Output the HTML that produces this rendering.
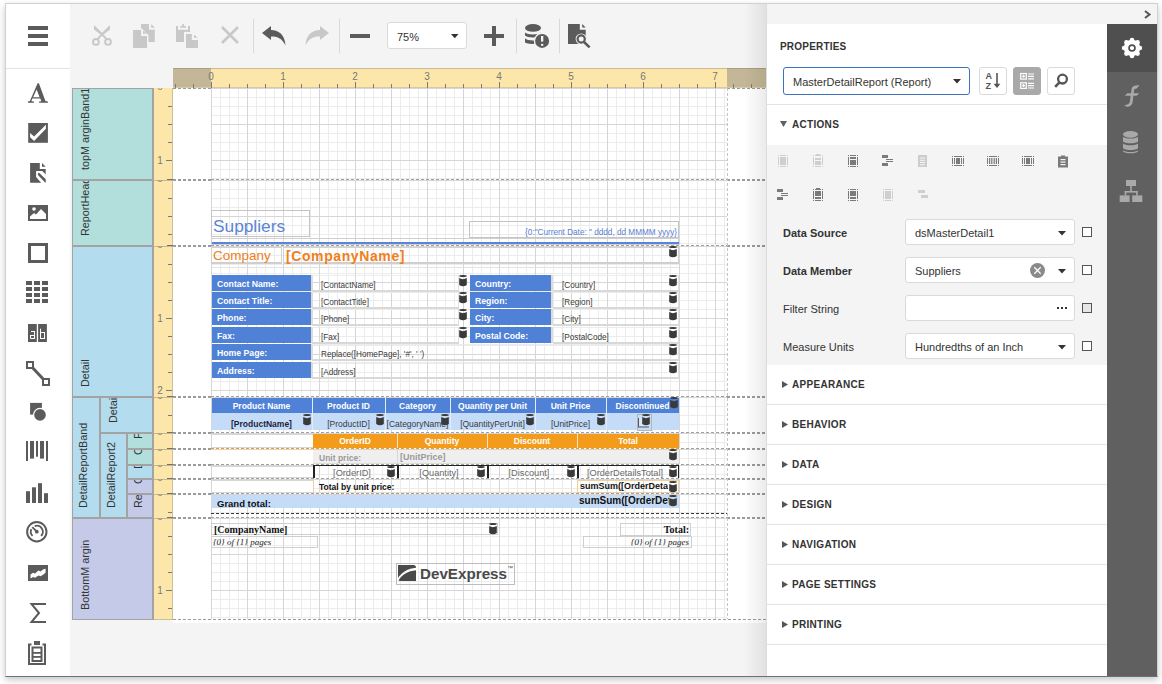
<!DOCTYPE html><html><head><meta charset="utf-8"><style>
*{margin:0;padding:0;box-sizing:border-box}
html,body{width:1162px;height:684px;overflow:hidden;background:#fff;font-family:"Liberation Sans", sans-serif}
.abs{position:absolute}
.rt{position:absolute;white-space:nowrap;transform-origin:0 0;transform:rotate(-90deg);font-size:12px;color:#333;line-height:14px}
svg{position:absolute;overflow:visible}
.t{position:absolute;white-space:nowrap}
</style></head><body>
<div class="abs" style="left:5px;top:3px;width:1153px;height:674px;box-shadow:0 3px 7px rgba(0,0,0,.22);background:#f4f4f4"></div>
<div class="abs" style="left:5px;top:3px;width:1153px;height:674px;border:1px solid #d0d0d0;border-bottom-color:#707070;z-index:50;pointer-events:none"></div>
<div class="abs" style="left:6px;top:4px;width:64px;height:672px;background:#fff"></div>
<div class="abs" style="left:6px;top:68px;width:64px;height:1px;background:#e3e3e3"></div>
<div class="abs" style="left:28px;top:26px;width:20px;height:4px;background:#5b5b5b"></div>
<div class="abs" style="left:28px;top:34px;width:20px;height:4px;background:#5b5b5b"></div>
<div class="abs" style="left:28px;top:42px;width:20px;height:4px;background:#5b5b5b"></div>
<svg style="left:24px;top:78px" width="28" height="30" viewBox="0 0 28 30"><path fill-rule="evenodd" d="M13.6 5.2 H14.9 L21.4 22.9 L23.9 23.6 V24.8 H15.1 V23.6 L17.4 23.2 L16.3 20.6 H8.3 L7.4 23.2 L9.9 23.6 V24.8 H3.9 V23.6 L5.9 23.1 Z M12.6 11.6 L9.1 19.3 H15.6 Z" fill="#5b5b5b"/></svg>
<svg style="left:28px;top:123px" width="20" height="20" viewBox="0 0 20 20"><rect x="0.2" y="0" width="19.7" height="19.8" fill="#5b5b5b"/><path d="M2.1 10.1 L2.1 14.3 L6.1 18 L17.9 5.7 L17.9 1.8 L6.1 13.6 Z" fill="#fff"/></svg>
<svg style="left:24px;top:158px" width="28" height="30" viewBox="0 0 28 30"><path d="M6.1 5 H15.8 V11 H21.7 V24.8 H6.1 Z" fill="#5b5b5b"/><path d="M18 5 V8.8 H21.7 Z" fill="#5b5b5b"/><path d="M12.1 12.9 H18.2 L21.9 16.6 V25 H17.3 L12.1 19 Z" fill="#fff"/><path d="M13.9 15.5 L15.1 14.8 L21.7 21.2 V24.6 H21.1 L13.9 17.1 Z" fill="#5b5b5b"/></svg>
<svg style="left:28px;top:205px" width="20" height="16" viewBox="0 0 20 16"><rect width="20" height="16" fill="#5b5b5b"/><path d="M2 14 V11.5 L6 8 L8 9.5 L13 4 L18 9 V14 Z" fill="#fff"/><circle cx="6" cy="4" r="1.8" fill="#fff"/></svg>
<div class="abs" style="left:28px;top:243px;width:20px;height:20px;border:3px solid #5b5b5b"></div>
<div class="abs" style="left:26px;top:281px;width:6px;height:4px;background:#5b5b5b"></div>
<div class="abs" style="left:34px;top:281px;width:6px;height:4px;background:#5b5b5b"></div>
<div class="abs" style="left:42px;top:281px;width:6px;height:4px;background:#5b5b5b"></div>
<div class="abs" style="left:26px;top:287px;width:6px;height:4px;background:#5b5b5b"></div>
<div class="abs" style="left:34px;top:287px;width:6px;height:4px;background:#5b5b5b"></div>
<div class="abs" style="left:42px;top:287px;width:6px;height:4px;background:#5b5b5b"></div>
<div class="abs" style="left:26px;top:293px;width:6px;height:4px;background:#5b5b5b"></div>
<div class="abs" style="left:34px;top:293px;width:6px;height:4px;background:#5b5b5b"></div>
<div class="abs" style="left:42px;top:293px;width:6px;height:4px;background:#5b5b5b"></div>
<div class="abs" style="left:26px;top:299px;width:6px;height:4px;background:#5b5b5b"></div>
<div class="abs" style="left:34px;top:299px;width:6px;height:4px;background:#5b5b5b"></div>
<div class="abs" style="left:42px;top:299px;width:6px;height:4px;background:#5b5b5b"></div>
<svg style="left:24px;top:318px" width="28" height="30" viewBox="0 0 28 30"><rect x="4" y="6" width="8.8" height="18" fill="#5b5b5b"/><rect x="14.1" y="6" width="8.8" height="18" fill="#5b5b5b"/><g fill="#fff"><rect x="7" y="13" width="4" height="1"/><rect x="10" y="13" width="1" height="8"/><rect x="6" y="17" width="4" height="1"/><rect x="6" y="17" width="1" height="3.5"/><rect x="6.5" y="20" width="4.5" height="1"/><rect x="16" y="10.7" width="1" height="10.3"/><rect x="16" y="14" width="5" height="1"/><rect x="20" y="14" width="1" height="7"/><rect x="16" y="20" width="5" height="1"/></g></svg>
<svg style="left:26px;top:361px" width="24" height="25" viewBox="0 0 24 25"><path d="M4 4 L20 21" stroke="#5b5b5b" stroke-width="3"/><rect x="1" y="1" width="6" height="6" fill="#fff" stroke="#5b5b5b" stroke-width="2"/><rect x="17" y="18" width="6" height="6" fill="#fff" stroke="#5b5b5b" stroke-width="2"/></svg>
<svg style="left:22px;top:398px" width="30" height="30" viewBox="0 0 30 30"><rect x="8.1" y="4.9" width="11.8" height="11.7" fill="#5b5b5b"/><circle cx="18" cy="16.9" r="7.1" fill="#fff"/><circle cx="18" cy="16.9" r="5.8" fill="#5b5b5b"/></svg>
<svg style="left:26px;top:441px" width="22" height="20" viewBox="0 0 22 20"><rect x="0" y="0" width="2" height="20" fill="#5b5b5b"/><rect x="4" y="0" width="4" height="17.6" fill="#5b5b5b"/><rect x="10" y="0" width="2" height="15.7" fill="#5b5b5b"/><rect x="14" y="0" width="4" height="17.6" fill="#5b5b5b"/><rect x="20" y="0" width="2" height="20" fill="#5b5b5b"/></svg>
<svg style="left:26px;top:483px" width="22" height="20" viewBox="0 0 22 20"><rect x="0" y="8.2" width="4" height="11.8" fill="#5b5b5b"/><rect x="6" y="4.300000000000001" width="4" height="15.7" fill="#5b5b5b"/><rect x="12" y="0.1999999999999993" width="4" height="19.8" fill="#5b5b5b"/><rect x="18" y="10.2" width="4" height="9.8" fill="#5b5b5b"/></svg>
<svg style="left:26px;top:521px" width="22" height="22" viewBox="0 0 22 22"><circle cx="10.8" cy="10.7" r="9.7" fill="none" stroke="#5b5b5b" stroke-width="2"/><path d="M6.56 14.94 A6 6 0 0 1 5.36 8.16" fill="none" stroke="#5b5b5b" stroke-width="1.8"/><path d="M8.75 5.06 A6 6 0 0 1 15.04 14.94" fill="none" stroke="#5b5b5b" stroke-width="1.8"/><path d="M10.8 10.7 L6.3 6.2" stroke="#5b5b5b" stroke-width="1.8"/><circle cx="10.8" cy="10.7" r="1.9" fill="#5b5b5b"/></svg>
<svg style="left:28px;top:565px" width="20" height="16" viewBox="0 0 20 16"><rect width="20" height="16" fill="#5b5b5b"/><path d="M2.5 9.5 L5 7.8 L7 8.6 L10.5 5.6 L12.5 6.6 L15.5 4.2 L17.6 3.8 L17.6 7.4 L15.5 9.4 L12.5 11.2 L10.5 10.4 L7 12.8 L5 12 L2.5 13.6 Z" fill="#fff"/></svg>
<svg style="left:30px;top:603px" width="17" height="20" viewBox="0 0 17 20"><path d="M16 1 H1.5 L9 10 L1.5 19 H16" fill="none" stroke="#5b5b5b" stroke-width="2"/></svg>
<svg style="left:28px;top:641px" width="18" height="24" viewBox="0 0 18 24"><path d="M3.5 3.5 H1 V23 H17 V3.5 H14.5" fill="none" stroke="#5b5b5b" stroke-width="2"/><rect x="6" y="0" width="6" height="4" fill="#5b5b5b"/><rect x="4.5" y="6.5" width="9" height="13.5" fill="none" stroke="#5b5b5b" stroke-width="2"/><rect x="5" y="11" width="8" height="1.8" fill="#5b5b5b"/><rect x="5" y="15" width="8" height="1.8" fill="#5b5b5b"/></svg>
<div class="abs" style="left:253px;top:19px;width:1px;height:34px;background:#d9d9d9"></div>
<div class="abs" style="left:339px;top:19px;width:1px;height:34px;background:#d9d9d9"></div>
<div class="abs" style="left:516px;top:19px;width:1px;height:34px;background:#d9d9d9"></div>
<div class="abs" style="left:559px;top:19px;width:1px;height:34px;background:#d9d9d9"></div>
<svg style="left:88px;top:20px" width="28" height="30" viewBox="0 0 28 30"><path d="M6 5.8 L6.8 5.8 L15.2 14 L19.2 18.6 L17.8 19.8 L13.8 15.6 L6 9.6 Z" fill="#c8c8c8"/><path d="M22 5.8 L21.2 5.8 L12.8 14 L8.8 18.6 L10.2 19.8 L14.2 15.6 L22 9.6 Z" fill="#c8c8c8"/><circle cx="7.9" cy="21.9" r="2.9" fill="none" stroke="#c8c8c8" stroke-width="1.9"/><circle cx="20" cy="21.9" r="2.9" fill="none" stroke="#c8c8c8" stroke-width="1.9"/></svg>
<svg style="left:128px;top:20px" width="76" height="30" viewBox="0 0 76 30"><path d="M13 4 H21 V9.8 H26.8 V22 H13 Z" fill="#c8c8c8"/><path d="M23.2 4 V7.8 H26.8 Z" fill="#c8c8c8"/><path d="M5 10 H13.2 L19 15.8 V28 H5 Z" fill="#f4f4f4" stroke="#f4f4f4" stroke-width="3"/><path d="M5 10 H13.1 V16 H19 V28 H5 Z" fill="#c8c8c8"/><path d="M15 10.4 V13.8 H19 Z" fill="#c8c8c8"/></svg>
<svg style="left:128px;top:20px" width="76" height="30" viewBox="0 0 76 30"><rect x="48" y="6" width="2" height="16" fill="#c8c8c8"/><rect x="60" y="6" width="2" height="6" fill="#c8c8c8"/><rect x="48" y="9.8" width="14" height="2" fill="#c8c8c8"/><rect x="48" y="11" width="8" height="11" fill="#c8c8c8"/><rect x="54.3" y="4" width="1.6" height="2" fill="#c8c8c8"/><rect x="52.3" y="6" width="5.6" height="1.7" fill="#c8c8c8"/><path d="M58 14 H63.8 L70 20 V28 H58 Z" fill="#f4f4f4" stroke="#f4f4f4" stroke-width="3"/><path d="M58 14 H63.8 V20 H70 V28 H58 Z" fill="#c8c8c8"/><path d="M66 14.4 V17.7 H69.6 Z" fill="#c8c8c8"/></svg>
<svg style="left:221px;top:26px" width="18" height="18" viewBox="0 0 18 18"><path d="M1 1 L17 17 M17 1 L1 17" stroke="#c8c8c8" stroke-width="2.6"/></svg>
<svg style="left:262px;top:26px" width="24" height="20" viewBox="0 0 24 20"><path d="M0 7 L9 0 V4 C17 4 23 9 23.5 19.5 C20 12 15 10.5 9 10.5 V14 Z" fill="#5b5b5b"/></svg>
<svg style="left:305px;top:26px" width="24" height="20" viewBox="0 0 24 20"><path d="M24 7 L15 0 V4 C7 4 1 9 0.5 19.5 C4 12 9 10.5 15 10.5 V14 Z" fill="#c8c8c8"/></svg>
<div class="abs" style="left:350px;top:34px;width:20px;height:4px;background:#5b5b5b"></div>
<div class="abs" style="left:387px;top:22px;width:80px;height:27px;background:#fff;border:1px solid #dadada;border-radius:3px"></div>
<div class="t" style="left:397px;top:30px;font-size:11px;line-height:14px;color:#333">75%</div>
<svg style="left:450.5px;top:34px" width="7.5" height="4.2" viewBox="0 0 9 5"><path d="M0 0 H9 L4.5 5 Z" fill="#333"/></svg>
<div class="abs" style="left:484px;top:34px;width:20px;height:4px;background:#5b5b5b"></div>
<div class="abs" style="left:492px;top:26px;width:4px;height:20px;background:#5b5b5b"></div>
<svg style="left:525px;top:24px" width="25" height="24" viewBox="0 0 25 24"><ellipse cx="8" cy="3.9" rx="8" ry="3.9" fill="#5b5b5b"/><path d="M0 8.6 C2 11.2 14 11.2 16 8.6 V11.6 C14 14.2 2 14.2 0 11.6 Z" fill="#5b5b5b"/><path d="M0 14.2 C2 16.8 12 16.8 13.5 15.8 L12 19.6 C6 20.2 2 19.8 0 18.6 Z" fill="#5b5b5b"/><circle cx="17.1" cy="16.9" r="8.3" fill="#f4f4f4"/><circle cx="17.1" cy="16.9" r="7" fill="#5b5b5b"/><rect x="16" y="12" width="2.3" height="5.6" fill="#f4f4f4"/><rect x="16" y="19.9" width="2.3" height="1.9" fill="#f4f4f4"/></svg>
<svg style="left:568px;top:24px" width="23" height="24" viewBox="0 0 23 24"><path d="M0 0 H11.8 V5.8 H17.7 V19.9 H0 Z" fill="#5b5b5b"/><path d="M14.2 0 V3.5 H17.7 Z" fill="#5b5b5b"/><circle cx="13.2" cy="15" r="5.6" fill="#f4f4f4"/><path d="M16.2 18.2 L21.6 23.4" stroke="#f4f4f4" stroke-width="5"/><circle cx="13.2" cy="15" r="3.6" fill="#f4f4f4" stroke="#5b5b5b" stroke-width="2.2"/><path d="M16 18 L21.6 23.4" stroke="#5b5b5b" stroke-width="2.6"/></svg>
<div class="abs" style="left:173px;top:88px;width:593px;height:535px;background:#fff"></div>
<div class="abs" style="left:173px;top:68px;width:593px;height:20px;background:#fde6a9;border-top:1px solid #c9bb94"></div>
<div class="abs" style="left:173px;top:68px;width:38px;height:20px;background:#c3b797;border-top:1px solid #aaa084"></div>
<div class="abs" style="left:727px;top:68px;width:39px;height:20px;background:#c3b797;border-top:1px solid #aaa084"></div>
<div class="abs" style="left:173px;top:87px;width:593px;height:1px;background:#d8c9a0"></div>
<div class="abs" style="left:175px;top:84px;width:1px;height:4px;background:#7a7a7a"></div>
<div class="abs" style="left:193px;top:84px;width:1px;height:4px;background:#7a7a7a"></div>
<div class="abs" style="left:211px;top:82px;width:1px;height:6px;background:#7a7a7a"></div>
<div class="abs" style="left:229px;top:84px;width:1px;height:4px;background:#7a7a7a"></div>
<div class="abs" style="left:247px;top:84px;width:1px;height:4px;background:#7a7a7a"></div>
<div class="abs" style="left:265px;top:84px;width:1px;height:4px;background:#7a7a7a"></div>
<div class="abs" style="left:283px;top:82px;width:1px;height:6px;background:#7a7a7a"></div>
<div class="abs" style="left:301px;top:84px;width:1px;height:4px;background:#7a7a7a"></div>
<div class="abs" style="left:319px;top:84px;width:1px;height:4px;background:#7a7a7a"></div>
<div class="abs" style="left:337px;top:84px;width:1px;height:4px;background:#7a7a7a"></div>
<div class="abs" style="left:355px;top:82px;width:1px;height:6px;background:#7a7a7a"></div>
<div class="abs" style="left:373px;top:84px;width:1px;height:4px;background:#7a7a7a"></div>
<div class="abs" style="left:391px;top:84px;width:1px;height:4px;background:#7a7a7a"></div>
<div class="abs" style="left:409px;top:84px;width:1px;height:4px;background:#7a7a7a"></div>
<div class="abs" style="left:427px;top:82px;width:1px;height:6px;background:#7a7a7a"></div>
<div class="abs" style="left:445px;top:84px;width:1px;height:4px;background:#7a7a7a"></div>
<div class="abs" style="left:463px;top:84px;width:1px;height:4px;background:#7a7a7a"></div>
<div class="abs" style="left:481px;top:84px;width:1px;height:4px;background:#7a7a7a"></div>
<div class="abs" style="left:499px;top:82px;width:1px;height:6px;background:#7a7a7a"></div>
<div class="abs" style="left:517px;top:84px;width:1px;height:4px;background:#7a7a7a"></div>
<div class="abs" style="left:535px;top:84px;width:1px;height:4px;background:#7a7a7a"></div>
<div class="abs" style="left:553px;top:84px;width:1px;height:4px;background:#7a7a7a"></div>
<div class="abs" style="left:571px;top:82px;width:1px;height:6px;background:#7a7a7a"></div>
<div class="abs" style="left:589px;top:84px;width:1px;height:4px;background:#7a7a7a"></div>
<div class="abs" style="left:607px;top:84px;width:1px;height:4px;background:#7a7a7a"></div>
<div class="abs" style="left:625px;top:84px;width:1px;height:4px;background:#7a7a7a"></div>
<div class="abs" style="left:643px;top:82px;width:1px;height:6px;background:#7a7a7a"></div>
<div class="abs" style="left:661px;top:84px;width:1px;height:4px;background:#7a7a7a"></div>
<div class="abs" style="left:679px;top:84px;width:1px;height:4px;background:#7a7a7a"></div>
<div class="abs" style="left:697px;top:84px;width:1px;height:4px;background:#7a7a7a"></div>
<div class="abs" style="left:715px;top:82px;width:1px;height:6px;background:#7a7a7a"></div>
<div class="abs" style="left:733px;top:84px;width:1px;height:4px;background:#7a7a7a"></div>
<div class="abs" style="left:751px;top:84px;width:1px;height:4px;background:#7a7a7a"></div>
<div class="t" style="left:201px;top:71px;width:20px;text-align:center;font-size:10px;line-height:11px;color:#787878">0</div>
<div class="t" style="left:273px;top:71px;width:20px;text-align:center;font-size:10px;line-height:11px;color:#787878">1</div>
<div class="t" style="left:345px;top:71px;width:20px;text-align:center;font-size:10px;line-height:11px;color:#787878">2</div>
<div class="t" style="left:417px;top:71px;width:20px;text-align:center;font-size:10px;line-height:11px;color:#787878">3</div>
<div class="t" style="left:489px;top:71px;width:20px;text-align:center;font-size:10px;line-height:11px;color:#787878">4</div>
<div class="t" style="left:561px;top:71px;width:20px;text-align:center;font-size:10px;line-height:11px;color:#787878">5</div>
<div class="t" style="left:633px;top:71px;width:20px;text-align:center;font-size:10px;line-height:11px;color:#787878">6</div>
<div class="t" style="left:705px;top:71px;width:20px;text-align:center;font-size:10px;line-height:11px;color:#787878">7</div>
<div class="abs" style="left:72px;top:88px;width:82px;height:532px;background:#a3a3a3"></div>
<div class="abs" style="left:154px;top:88px;width:19px;height:532px;background:#fde6a9;border-right:1px solid #cdbf99;border-bottom:1px solid #cdbf99"></div>
<div class="abs" style="left:173px;top:619px;width:593px;height:1px;background:repeating-linear-gradient(90deg,#9b9b9b 0 3px,transparent 3px 5px)"></div>
<div class="abs" style="left:73px;top:89px;width:79px;height:90px;background:#b2dfdb;overflow:hidden"><div class="rt" style="left:6px;top:81px;font-size:10.8px;line-height:13px;color:#333">topM arginBand1</div></div>
<div class="abs" style="left:73px;top:181px;width:79px;height:64px;background:#b2dfdb;overflow:hidden"><div class="rt" style="left:6px;top:55px;font-size:10.8px;line-height:13px;color:#333">ReportHeader</div></div>
<div class="abs" style="left:73px;top:247px;width:79px;height:149px;background:#b3dcee;overflow:hidden"><div class="rt" style="left:6px;top:140px;font-size:10.8px;line-height:13px;color:#333">Detail</div></div>
<div class="abs" style="left:73px;top:398px;width:26px;height:119px;background:#b3dcee;overflow:hidden"><div class="rt" style="left:4px;top:110px;font-size:10.8px;line-height:13px;color:#333">DetailReportBand</div></div>
<div class="abs" style="left:101px;top:398px;width:51px;height:34px;background:#b3dcee;overflow:hidden"><div class="rt" style="left:6px;top:25px;font-size:10.8px;line-height:13px;color:#333">Detail</div></div>
<div class="abs" style="left:101px;top:434px;width:25px;height:83px;background:#b3dcee;overflow:hidden"><div class="rt" style="left:4px;top:74px;font-size:10.8px;line-height:13px;color:#333">DetailReport2</div></div>
<div class="abs" style="left:128px;top:434px;width:24px;height:14px;background:#b2dfdb;overflow:hidden"><div class="rt" style="left:4px;top:5px;font-size:10.8px;line-height:13px;color:#333">F</div></div>
<div class="abs" style="left:128px;top:450px;width:24px;height:14px;background:#b2dfdb;overflow:hidden"><div class="rt" style="left:4px;top:5px;font-size:10.8px;line-height:13px;color:#333">C</div></div>
<div class="abs" style="left:128px;top:466px;width:24px;height:12px;background:#b3dcee;overflow:hidden"><div class="rt" style="left:4px;top:3px;font-size:10.8px;line-height:13px;color:#333">D</div></div>
<div class="abs" style="left:128px;top:480px;width:24px;height:13px;background:#c5cae9;overflow:hidden"><div class="rt" style="left:4px;top:4px;font-size:10.8px;line-height:13px;color:#333">C</div></div>
<div class="abs" style="left:128px;top:495px;width:24px;height:22px;background:#c5cae9;overflow:hidden"><div class="rt" style="left:4px;top:13px;font-size:10.8px;line-height:13px;color:#333">Re</div></div>
<div class="abs" style="left:73px;top:519px;width:79px;height:100px;background:#c5cae9;overflow:hidden"><div class="rt" style="left:6px;top:91px;font-size:10.8px;line-height:13px;color:#333">BottomM argin</div></div>
<div class="abs" style="left:211px;top:88px;width:516px;height:91px;background:repeating-linear-gradient(90deg,#d6d6d6 0 1px,transparent 1px 36px),repeating-linear-gradient(180deg,#d6d6d6 0 1px,transparent 1px 36px),repeating-linear-gradient(90deg,#ececec 0 1px,transparent 1px 9px),repeating-linear-gradient(180deg,#ececec 0 1px,transparent 1px 9px)"></div>
<div class="abs" style="left:211px;top:180px;width:516px;height:65px;background:repeating-linear-gradient(90deg,#d6d6d6 0 1px,transparent 1px 36px),repeating-linear-gradient(180deg,#d6d6d6 0 1px,transparent 1px 36px),repeating-linear-gradient(90deg,#ececec 0 1px,transparent 1px 9px),repeating-linear-gradient(180deg,#ececec 0 1px,transparent 1px 9px)"></div>
<div class="abs" style="left:211px;top:246px;width:516px;height:150px;background:repeating-linear-gradient(90deg,#d6d6d6 0 1px,transparent 1px 36px),repeating-linear-gradient(180deg,#d6d6d6 0 1px,transparent 1px 36px),repeating-linear-gradient(90deg,#ececec 0 1px,transparent 1px 9px),repeating-linear-gradient(180deg,#ececec 0 1px,transparent 1px 9px)"></div>
<div class="abs" style="left:211px;top:397px;width:516px;height:35px;background:repeating-linear-gradient(90deg,#d6d6d6 0 1px,transparent 1px 36px),repeating-linear-gradient(180deg,#d6d6d6 0 1px,transparent 1px 36px),repeating-linear-gradient(90deg,#ececec 0 1px,transparent 1px 9px),repeating-linear-gradient(180deg,#ececec 0 1px,transparent 1px 9px)"></div>
<div class="abs" style="left:211px;top:433px;width:516px;height:15px;background:repeating-linear-gradient(90deg,#d6d6d6 0 1px,transparent 1px 36px),repeating-linear-gradient(180deg,#d6d6d6 0 1px,transparent 1px 36px),repeating-linear-gradient(90deg,#ececec 0 1px,transparent 1px 9px),repeating-linear-gradient(180deg,#ececec 0 1px,transparent 1px 9px)"></div>
<div class="abs" style="left:211px;top:449px;width:516px;height:15px;background:repeating-linear-gradient(90deg,#d6d6d6 0 1px,transparent 1px 36px),repeating-linear-gradient(180deg,#d6d6d6 0 1px,transparent 1px 36px),repeating-linear-gradient(90deg,#ececec 0 1px,transparent 1px 9px),repeating-linear-gradient(180deg,#ececec 0 1px,transparent 1px 9px)"></div>
<div class="abs" style="left:211px;top:465px;width:516px;height:13px;background:repeating-linear-gradient(90deg,#d6d6d6 0 1px,transparent 1px 36px),repeating-linear-gradient(180deg,#d6d6d6 0 1px,transparent 1px 36px),repeating-linear-gradient(90deg,#ececec 0 1px,transparent 1px 9px),repeating-linear-gradient(180deg,#ececec 0 1px,transparent 1px 9px)"></div>
<div class="abs" style="left:211px;top:479px;width:516px;height:14px;background:repeating-linear-gradient(90deg,#d6d6d6 0 1px,transparent 1px 36px),repeating-linear-gradient(180deg,#d6d6d6 0 1px,transparent 1px 36px),repeating-linear-gradient(90deg,#ececec 0 1px,transparent 1px 9px),repeating-linear-gradient(180deg,#ececec 0 1px,transparent 1px 9px)"></div>
<div class="abs" style="left:211px;top:494px;width:516px;height:23px;background:repeating-linear-gradient(90deg,#d6d6d6 0 1px,transparent 1px 36px),repeating-linear-gradient(180deg,#d6d6d6 0 1px,transparent 1px 36px),repeating-linear-gradient(90deg,#ececec 0 1px,transparent 1px 9px),repeating-linear-gradient(180deg,#ececec 0 1px,transparent 1px 9px)"></div>
<div class="abs" style="left:211px;top:518px;width:516px;height:101px;background:repeating-linear-gradient(90deg,#d6d6d6 0 1px,transparent 1px 36px),repeating-linear-gradient(180deg,#d6d6d6 0 1px,transparent 1px 36px),repeating-linear-gradient(90deg,#ececec 0 1px,transparent 1px 9px),repeating-linear-gradient(180deg,#ececec 0 1px,transparent 1px 9px)"></div>
<div class="abs" style="left:173px;top:88px;width:38px;height:1px;background:repeating-linear-gradient(90deg,#9b9b9b 0 3px,transparent 3px 5px)"></div>
<div class="abs" style="left:727px;top:88px;width:39px;height:1px;background:repeating-linear-gradient(90deg,#9b9b9b 0 3px,transparent 3px 5px)"></div>
<div class="abs" style="left:173px;top:179px;width:38px;height:2px;background:repeating-linear-gradient(90deg,#9b9b9b 0 3px,transparent 3px 5px)"></div>
<div class="abs" style="left:211px;top:179px;width:516px;height:1px;background:repeating-linear-gradient(90deg,#a0a0a0 0 3px,transparent 3px 5px)"></div>
<div class="abs" style="left:727px;top:179px;width:39px;height:2px;background:repeating-linear-gradient(90deg,#9b9b9b 0 3px,transparent 3px 5px)"></div>
<div class="abs" style="left:154px;top:180px;width:19px;height:1px;background:#c8b98f"></div>
<div class="abs" style="left:167px;top:179px;width:6px;height:1px;background:#6f6f6f"></div>
<div class="abs" style="left:173px;top:245px;width:38px;height:2px;background:repeating-linear-gradient(90deg,#9b9b9b 0 3px,transparent 3px 5px)"></div>
<div class="abs" style="left:211px;top:245px;width:516px;height:1px;background:repeating-linear-gradient(90deg,#a0a0a0 0 3px,transparent 3px 5px)"></div>
<div class="abs" style="left:727px;top:245px;width:39px;height:2px;background:repeating-linear-gradient(90deg,#9b9b9b 0 3px,transparent 3px 5px)"></div>
<div class="abs" style="left:154px;top:246px;width:19px;height:1px;background:#c8b98f"></div>
<div class="abs" style="left:167px;top:245px;width:6px;height:1px;background:#6f6f6f"></div>
<div class="abs" style="left:173px;top:396px;width:38px;height:2px;background:repeating-linear-gradient(90deg,#9b9b9b 0 3px,transparent 3px 5px)"></div>
<div class="abs" style="left:211px;top:396px;width:516px;height:1px;background:repeating-linear-gradient(90deg,#a0a0a0 0 3px,transparent 3px 5px)"></div>
<div class="abs" style="left:727px;top:396px;width:39px;height:2px;background:repeating-linear-gradient(90deg,#9b9b9b 0 3px,transparent 3px 5px)"></div>
<div class="abs" style="left:154px;top:397px;width:19px;height:1px;background:#c8b98f"></div>
<div class="abs" style="left:167px;top:396px;width:6px;height:1px;background:#6f6f6f"></div>
<div class="abs" style="left:173px;top:432px;width:38px;height:2px;background:repeating-linear-gradient(90deg,#9b9b9b 0 3px,transparent 3px 5px)"></div>
<div class="abs" style="left:211px;top:432px;width:516px;height:1px;background:repeating-linear-gradient(90deg,#a0a0a0 0 3px,transparent 3px 5px)"></div>
<div class="abs" style="left:727px;top:432px;width:39px;height:2px;background:repeating-linear-gradient(90deg,#9b9b9b 0 3px,transparent 3px 5px)"></div>
<div class="abs" style="left:154px;top:433px;width:19px;height:1px;background:#c8b98f"></div>
<div class="abs" style="left:167px;top:432px;width:6px;height:1px;background:#6f6f6f"></div>
<div class="abs" style="left:173px;top:448px;width:38px;height:2px;background:repeating-linear-gradient(90deg,#9b9b9b 0 3px,transparent 3px 5px)"></div>
<div class="abs" style="left:211px;top:448px;width:516px;height:1px;background:repeating-linear-gradient(90deg,#a0a0a0 0 3px,transparent 3px 5px)"></div>
<div class="abs" style="left:727px;top:448px;width:39px;height:2px;background:repeating-linear-gradient(90deg,#9b9b9b 0 3px,transparent 3px 5px)"></div>
<div class="abs" style="left:154px;top:449px;width:19px;height:1px;background:#c8b98f"></div>
<div class="abs" style="left:167px;top:448px;width:6px;height:1px;background:#6f6f6f"></div>
<div class="abs" style="left:173px;top:464px;width:38px;height:2px;background:repeating-linear-gradient(90deg,#9b9b9b 0 3px,transparent 3px 5px)"></div>
<div class="abs" style="left:211px;top:464px;width:516px;height:1px;background:repeating-linear-gradient(90deg,#a0a0a0 0 3px,transparent 3px 5px)"></div>
<div class="abs" style="left:727px;top:464px;width:39px;height:2px;background:repeating-linear-gradient(90deg,#9b9b9b 0 3px,transparent 3px 5px)"></div>
<div class="abs" style="left:154px;top:465px;width:19px;height:1px;background:#c8b98f"></div>
<div class="abs" style="left:167px;top:464px;width:6px;height:1px;background:#6f6f6f"></div>
<div class="abs" style="left:173px;top:478px;width:38px;height:2px;background:repeating-linear-gradient(90deg,#9b9b9b 0 3px,transparent 3px 5px)"></div>
<div class="abs" style="left:211px;top:478px;width:516px;height:1px;background:repeating-linear-gradient(90deg,#a0a0a0 0 3px,transparent 3px 5px)"></div>
<div class="abs" style="left:727px;top:478px;width:39px;height:2px;background:repeating-linear-gradient(90deg,#9b9b9b 0 3px,transparent 3px 5px)"></div>
<div class="abs" style="left:154px;top:479px;width:19px;height:1px;background:#c8b98f"></div>
<div class="abs" style="left:167px;top:478px;width:6px;height:1px;background:#6f6f6f"></div>
<div class="abs" style="left:173px;top:493px;width:38px;height:2px;background:repeating-linear-gradient(90deg,#9b9b9b 0 3px,transparent 3px 5px)"></div>
<div class="abs" style="left:211px;top:493px;width:516px;height:1px;background:repeating-linear-gradient(90deg,#a0a0a0 0 3px,transparent 3px 5px)"></div>
<div class="abs" style="left:727px;top:493px;width:39px;height:2px;background:repeating-linear-gradient(90deg,#9b9b9b 0 3px,transparent 3px 5px)"></div>
<div class="abs" style="left:154px;top:494px;width:19px;height:1px;background:#c8b98f"></div>
<div class="abs" style="left:167px;top:493px;width:6px;height:1px;background:#6f6f6f"></div>
<div class="abs" style="left:173px;top:517px;width:38px;height:2px;background:repeating-linear-gradient(90deg,#9b9b9b 0 3px,transparent 3px 5px)"></div>
<div class="abs" style="left:211px;top:517px;width:516px;height:1px;background:repeating-linear-gradient(90deg,#a0a0a0 0 3px,transparent 3px 5px)"></div>
<div class="abs" style="left:727px;top:517px;width:39px;height:2px;background:repeating-linear-gradient(90deg,#9b9b9b 0 3px,transparent 3px 5px)"></div>
<div class="abs" style="left:154px;top:518px;width:19px;height:1px;background:#c8b98f"></div>
<div class="abs" style="left:167px;top:517px;width:6px;height:1px;background:#6f6f6f"></div>
<div class="abs" style="left:727px;top:88px;width:1px;height:531px;background:repeating-linear-gradient(180deg,#c4c4c4 0 3px,transparent 3px 5px)"></div>
<div class="abs" style="left:168px;top:106px;width:4px;height:1px;background:#7a7a7a"></div>
<div class="abs" style="left:168px;top:124px;width:4px;height:1px;background:#7a7a7a"></div>
<div class="abs" style="left:168px;top:142px;width:4px;height:1px;background:#7a7a7a"></div>
<div class="abs" style="left:166px;top:160px;width:6px;height:1px;background:#7a7a7a"></div>
<div class="t" style="left:155px;top:155px;width:10px;text-align:center;font-size:10px;line-height:11px;color:#787878">1</div>
<div class="abs" style="left:153px;top:88px;width:13px;height:5px;overflow:hidden"><div class="t" style="left:2px;top:-6px;width:10px;text-align:center;font-size:9px;line-height:11px;color:#808080">0</div></div>
<div class="abs" style="left:168px;top:198px;width:4px;height:1px;background:#7a7a7a"></div>
<div class="abs" style="left:168px;top:216px;width:4px;height:1px;background:#7a7a7a"></div>
<div class="abs" style="left:168px;top:234px;width:4px;height:1px;background:#7a7a7a"></div>
<div class="abs" style="left:153px;top:180px;width:13px;height:5px;overflow:hidden"><div class="t" style="left:2px;top:-6px;width:10px;text-align:center;font-size:9px;line-height:11px;color:#808080">0</div></div>
<div class="abs" style="left:168px;top:264px;width:4px;height:1px;background:#7a7a7a"></div>
<div class="abs" style="left:168px;top:282px;width:4px;height:1px;background:#7a7a7a"></div>
<div class="abs" style="left:168px;top:300px;width:4px;height:1px;background:#7a7a7a"></div>
<div class="abs" style="left:166px;top:318px;width:6px;height:1px;background:#7a7a7a"></div>
<div class="t" style="left:155px;top:313px;width:10px;text-align:center;font-size:10px;line-height:11px;color:#787878">1</div>
<div class="abs" style="left:168px;top:336px;width:4px;height:1px;background:#7a7a7a"></div>
<div class="abs" style="left:168px;top:354px;width:4px;height:1px;background:#7a7a7a"></div>
<div class="abs" style="left:168px;top:372px;width:4px;height:1px;background:#7a7a7a"></div>
<div class="abs" style="left:166px;top:390px;width:6px;height:1px;background:#7a7a7a"></div>
<div class="t" style="left:155px;top:385px;width:10px;text-align:center;font-size:10px;line-height:11px;color:#787878">2</div>
<div class="abs" style="left:153px;top:246px;width:13px;height:5px;overflow:hidden"><div class="t" style="left:2px;top:-6px;width:10px;text-align:center;font-size:9px;line-height:11px;color:#808080">0</div></div>
<div class="abs" style="left:168px;top:415px;width:4px;height:1px;background:#7a7a7a"></div>
<div class="abs" style="left:153px;top:397px;width:13px;height:5px;overflow:hidden"><div class="t" style="left:2px;top:-6px;width:10px;text-align:center;font-size:9px;line-height:11px;color:#808080">0</div></div>
<div class="abs" style="left:153px;top:433px;width:13px;height:5px;overflow:hidden"><div class="t" style="left:2px;top:-6px;width:10px;text-align:center;font-size:9px;line-height:11px;color:#808080">0</div></div>
<div class="abs" style="left:153px;top:449px;width:13px;height:5px;overflow:hidden"><div class="t" style="left:2px;top:-6px;width:10px;text-align:center;font-size:9px;line-height:11px;color:#808080">0</div></div>
<div class="abs" style="left:153px;top:465px;width:13px;height:5px;overflow:hidden"><div class="t" style="left:2px;top:-6px;width:10px;text-align:center;font-size:9px;line-height:11px;color:#808080">0</div></div>
<div class="abs" style="left:153px;top:479px;width:13px;height:5px;overflow:hidden"><div class="t" style="left:2px;top:-6px;width:10px;text-align:center;font-size:9px;line-height:11px;color:#808080">0</div></div>
<div class="abs" style="left:168px;top:512px;width:4px;height:1px;background:#7a7a7a"></div>
<div class="abs" style="left:153px;top:494px;width:13px;height:5px;overflow:hidden"><div class="t" style="left:2px;top:-6px;width:10px;text-align:center;font-size:9px;line-height:11px;color:#808080">0</div></div>
<div class="abs" style="left:168px;top:536px;width:4px;height:1px;background:#7a7a7a"></div>
<div class="abs" style="left:168px;top:554px;width:4px;height:1px;background:#7a7a7a"></div>
<div class="abs" style="left:168px;top:572px;width:4px;height:1px;background:#7a7a7a"></div>
<div class="abs" style="left:166px;top:590px;width:6px;height:1px;background:#7a7a7a"></div>
<div class="t" style="left:155px;top:585px;width:10px;text-align:center;font-size:10px;line-height:11px;color:#787878">1</div>
<div class="abs" style="left:168px;top:608px;width:4px;height:1px;background:#7a7a7a"></div>
<div class="abs" style="left:153px;top:518px;width:13px;height:5px;overflow:hidden"><div class="t" style="left:2px;top:-6px;width:10px;text-align:center;font-size:9px;line-height:11px;color:#808080">0</div></div>
<div class="abs" style="left:744px;top:4px;width:22px;height:672px;background:linear-gradient(90deg,rgba(0,0,0,0),rgba(0,0,0,.08))"></div>
<div class="abs" style="left:211px;top:210px;width:99px;height:27px;border:1px solid #c4c4c4;background:transparent;"></div>
<div class="t" style="left:213px;top:215px;font-size:17.3px;line-height:22px;color:#5a85d6;font-weight:normal;">Suppliers</div>
<div class="abs" style="left:469px;top:221px;width:210px;height:17px;border:1px solid #c4c4c4;background:transparent;"></div>
<div class="t" style="left:469px;top:228px;font-size:8.2px;line-height:10px;color:#5a80d4;font-weight:normal;width:208px;text-align:right;">{0:"Current Date: " dddd, dd MMMM yyyy}</div>
<div class="abs" style="left:211px;top:238px;width:468px;height:7px;border:1px solid #d0d0d0;background:transparent;"></div>
<div class="abs" style="left:212px;top:242px;width:467px;height:2px;background:#5a85d6"></div>
<div class="abs" style="left:211px;top:247px;width:71px;height:17px;border:1px solid #d2d2d2;background:transparent;border-bottom:2px solid #cfcfcf"></div>
<div class="t" style="left:213px;top:249px;font-size:13.5px;line-height:14px;color:#f07f1a;font-weight:normal;">Company</div>
<div class="abs" style="left:283px;top:247px;width:396px;height:17px;border:1px solid #d2d2d2;background:transparent;border-bottom:2px solid #cfcfcf"></div>
<div class="t" style="left:286px;top:249px;font-size:14px;line-height:14px;color:#f07f1a;font-weight:bold;letter-spacing:0.6px">[CompanyName]</div>
<svg style="left:669px;top:246px" width="8" height="12" viewBox="0 0 8 12"><ellipse cx="4" cy="1" rx="3.8" ry="0.95" fill="#3a3a3a"/><path d="M0.2 3.1 Q4 5.2 7.8 3.1 V10 Q4 12.6 0.2 10 Z" fill="#3a3a3a"/></svg>
<div class="abs" style="left:211px;top:267px;width:468px;height:1px;background:#e2e2e2"></div>
<div class="abs" style="left:212px;top:275px;width:101px;height:16px;background:#4f81d6;border-right:2px solid #dcdcdc"></div>
<div class="t" style="left:217px;top:279px;font-size:8.7px;line-height:10px;color:#fff;font-weight:bold;">Contact Name:</div>
<div class="abs" style="left:312px;top:275px;width:147px;height:17px;border-top:1px solid #ececec;border-bottom:2px solid #d8d8d8;border-right:1px solid #e0e0e0"></div>
<div class="t" style="left:321px;top:281px;font-size:8.2px;line-height:10px;color:#3a3a3a;font-weight:normal;">[ContactName]</div>
<div class="abs" style="left:212px;top:292px;width:101px;height:16px;background:#4f81d6;border-right:2px solid #dcdcdc"></div>
<div class="t" style="left:217px;top:296px;font-size:8.7px;line-height:10px;color:#fff;font-weight:bold;">Contact Title:</div>
<div class="abs" style="left:312px;top:292px;width:147px;height:17px;border-top:1px solid #ececec;border-bottom:2px solid #d8d8d8;border-right:1px solid #e0e0e0"></div>
<div class="t" style="left:321px;top:298px;font-size:8.2px;line-height:10px;color:#3a3a3a;font-weight:normal;">[ContactTitle]</div>
<div class="abs" style="left:212px;top:309px;width:101px;height:16px;background:#4f81d6;border-right:2px solid #dcdcdc"></div>
<div class="t" style="left:217px;top:313px;font-size:8.7px;line-height:10px;color:#fff;font-weight:bold;">Phone:</div>
<div class="abs" style="left:312px;top:309px;width:147px;height:17px;border-top:1px solid #ececec;border-bottom:2px solid #d8d8d8;border-right:1px solid #e0e0e0"></div>
<div class="t" style="left:321px;top:315px;font-size:8.2px;line-height:10px;color:#3a3a3a;font-weight:normal;">[Phone]</div>
<div class="abs" style="left:212px;top:327px;width:101px;height:16px;background:#4f81d6;border-right:2px solid #dcdcdc"></div>
<div class="t" style="left:217px;top:331px;font-size:8.7px;line-height:10px;color:#fff;font-weight:bold;">Fax:</div>
<div class="abs" style="left:312px;top:327px;width:147px;height:17px;border-top:1px solid #ececec;border-bottom:2px solid #d8d8d8;border-right:1px solid #e0e0e0"></div>
<div class="t" style="left:321px;top:333px;font-size:8.2px;line-height:10px;color:#3a3a3a;font-weight:normal;">[Fax]</div>
<div class="abs" style="left:212px;top:344px;width:101px;height:16px;background:#4f81d6;border-right:2px solid #dcdcdc"></div>
<div class="t" style="left:217px;top:348px;font-size:8.7px;line-height:10px;color:#fff;font-weight:bold;">Home Page:</div>
<div class="abs" style="left:312px;top:344px;width:367px;height:17px;border-top:1px solid #ececec;border-bottom:2px solid #d8d8d8;border-right:1px solid #e0e0e0"></div>
<div class="t" style="left:321px;top:350px;font-size:8.2px;line-height:10px;color:#3a3a3a;font-weight:normal;">Replace([HomePage], '#', ' ')</div>
<div class="abs" style="left:212px;top:362px;width:101px;height:16px;background:#4f81d6;border-right:2px solid #dcdcdc"></div>
<div class="t" style="left:217px;top:366px;font-size:8.7px;line-height:10px;color:#fff;font-weight:bold;">Address:</div>
<div class="abs" style="left:312px;top:362px;width:367px;height:17px;border-top:1px solid #ececec;border-bottom:2px solid #d8d8d8;border-right:1px solid #e0e0e0"></div>
<div class="t" style="left:321px;top:368px;font-size:8.2px;line-height:10px;color:#3a3a3a;font-weight:normal;">[Address]</div>
<svg style="left:459px;top:275px" width="8" height="12" viewBox="0 0 8 12"><ellipse cx="4" cy="1" rx="3.8" ry="0.95" fill="#3a3a3a"/><path d="M0.2 3.1 Q4 5.2 7.8 3.1 V10 Q4 12.6 0.2 10 Z" fill="#3a3a3a"/></svg>
<div class="abs" style="left:470px;top:275px;width:83px;height:16px;background:#4f81d6;border-right:2px solid #dcdcdc"></div>
<div class="t" style="left:475px;top:279px;font-size:8.7px;line-height:10px;color:#fff;font-weight:bold;">Country:</div>
<div class="abs" style="left:553px;top:275px;width:126px;height:17px;border-top:1px solid #ececec;border-bottom:2px solid #d8d8d8;border-right:1px solid #e0e0e0"></div>
<div class="t" style="left:562px;top:281px;font-size:8.2px;line-height:10px;color:#3a3a3a;font-weight:normal;">[Country]</div>
<svg style="left:459px;top:292px" width="8" height="12" viewBox="0 0 8 12"><ellipse cx="4" cy="1" rx="3.8" ry="0.95" fill="#3a3a3a"/><path d="M0.2 3.1 Q4 5.2 7.8 3.1 V10 Q4 12.6 0.2 10 Z" fill="#3a3a3a"/></svg>
<div class="abs" style="left:470px;top:292px;width:83px;height:16px;background:#4f81d6;border-right:2px solid #dcdcdc"></div>
<div class="t" style="left:475px;top:296px;font-size:8.7px;line-height:10px;color:#fff;font-weight:bold;">Region:</div>
<div class="abs" style="left:553px;top:292px;width:126px;height:17px;border-top:1px solid #ececec;border-bottom:2px solid #d8d8d8;border-right:1px solid #e0e0e0"></div>
<div class="t" style="left:562px;top:298px;font-size:8.2px;line-height:10px;color:#3a3a3a;font-weight:normal;">[Region]</div>
<svg style="left:459px;top:309px" width="8" height="12" viewBox="0 0 8 12"><ellipse cx="4" cy="1" rx="3.8" ry="0.95" fill="#3a3a3a"/><path d="M0.2 3.1 Q4 5.2 7.8 3.1 V10 Q4 12.6 0.2 10 Z" fill="#3a3a3a"/></svg>
<div class="abs" style="left:470px;top:309px;width:83px;height:16px;background:#4f81d6;border-right:2px solid #dcdcdc"></div>
<div class="t" style="left:475px;top:313px;font-size:8.7px;line-height:10px;color:#fff;font-weight:bold;">City:</div>
<div class="abs" style="left:553px;top:309px;width:126px;height:17px;border-top:1px solid #ececec;border-bottom:2px solid #d8d8d8;border-right:1px solid #e0e0e0"></div>
<div class="t" style="left:562px;top:315px;font-size:8.2px;line-height:10px;color:#3a3a3a;font-weight:normal;">[City]</div>
<svg style="left:459px;top:327px" width="8" height="12" viewBox="0 0 8 12"><ellipse cx="4" cy="1" rx="3.8" ry="0.95" fill="#3a3a3a"/><path d="M0.2 3.1 Q4 5.2 7.8 3.1 V10 Q4 12.6 0.2 10 Z" fill="#3a3a3a"/></svg>
<div class="abs" style="left:470px;top:327px;width:83px;height:16px;background:#4f81d6;border-right:2px solid #dcdcdc"></div>
<div class="t" style="left:475px;top:331px;font-size:8.7px;line-height:10px;color:#fff;font-weight:bold;">Postal Code:</div>
<div class="abs" style="left:553px;top:327px;width:126px;height:17px;border-top:1px solid #ececec;border-bottom:2px solid #d8d8d8;border-right:1px solid #e0e0e0"></div>
<div class="t" style="left:562px;top:333px;font-size:8.2px;line-height:10px;color:#3a3a3a;font-weight:normal;">[PostalCode]</div>
<svg style="left:669px;top:275px" width="8" height="12" viewBox="0 0 8 12"><ellipse cx="4" cy="1" rx="3.8" ry="0.95" fill="#3a3a3a"/><path d="M0.2 3.1 Q4 5.2 7.8 3.1 V10 Q4 12.6 0.2 10 Z" fill="#3a3a3a"/></svg>
<svg style="left:669px;top:292px" width="8" height="12" viewBox="0 0 8 12"><ellipse cx="4" cy="1" rx="3.8" ry="0.95" fill="#3a3a3a"/><path d="M0.2 3.1 Q4 5.2 7.8 3.1 V10 Q4 12.6 0.2 10 Z" fill="#3a3a3a"/></svg>
<svg style="left:669px;top:309px" width="8" height="12" viewBox="0 0 8 12"><ellipse cx="4" cy="1" rx="3.8" ry="0.95" fill="#3a3a3a"/><path d="M0.2 3.1 Q4 5.2 7.8 3.1 V10 Q4 12.6 0.2 10 Z" fill="#3a3a3a"/></svg>
<svg style="left:669px;top:327px" width="8" height="12" viewBox="0 0 8 12"><ellipse cx="4" cy="1" rx="3.8" ry="0.95" fill="#3a3a3a"/><path d="M0.2 3.1 Q4 5.2 7.8 3.1 V10 Q4 12.6 0.2 10 Z" fill="#3a3a3a"/></svg>
<svg style="left:669px;top:344px" width="8" height="12" viewBox="0 0 8 12"><ellipse cx="4" cy="1" rx="3.8" ry="0.95" fill="#3a3a3a"/><path d="M0.2 3.1 Q4 5.2 7.8 3.1 V10 Q4 12.6 0.2 10 Z" fill="#3a3a3a"/></svg>
<svg style="left:669px;top:362px" width="8" height="12" viewBox="0 0 8 12"><ellipse cx="4" cy="1" rx="3.8" ry="0.95" fill="#3a3a3a"/><path d="M0.2 3.1 Q4 5.2 7.8 3.1 V10 Q4 12.6 0.2 10 Z" fill="#3a3a3a"/></svg>
<div class="abs" style="left:212px;top:398px;width:467px;height:15px;background:#4f81d6"></div>
<div class="abs" style="left:212px;top:413px;width:467px;height:17px;background:#c5dcf8"></div>
<div class="t" style="left:211px;top:401px;font-size:8.5px;line-height:10px;color:#fff;font-weight:bold;width:101px;text-align:center;overflow:hidden">Product Name</div>
<div class="t" style="left:211px;top:419px;font-size:8.5px;line-height:10px;color:#1e1e3c;font-weight:bold;width:101px;text-align:center;overflow:hidden">[ProductName]</div>
<svg style="left:303px;top:414px" width="8" height="12" viewBox="0 0 8 12"><ellipse cx="4" cy="1" rx="3.8" ry="0.95" fill="#3a3a3a"/><path d="M0.2 3.1 Q4 5.2 7.8 3.1 V10 Q4 12.6 0.2 10 Z" fill="#3a3a3a"/></svg>
<div class="abs" style="left:312px;top:398px;width:1px;height:32px;background:#e4ecf8"></div>
<div class="t" style="left:312px;top:401px;font-size:8.5px;line-height:10px;color:#fff;font-weight:bold;width:73px;text-align:center;overflow:hidden">Product ID</div>
<div class="t" style="left:312px;top:419px;font-size:8.5px;line-height:10px;color:#3a3a3a;font-weight:normal;width:73px;text-align:center;overflow:hidden">[ProductID]</div>
<svg style="left:376px;top:414px" width="8" height="12" viewBox="0 0 8 12"><ellipse cx="4" cy="1" rx="3.8" ry="0.95" fill="#3a3a3a"/><path d="M0.2 3.1 Q4 5.2 7.8 3.1 V10 Q4 12.6 0.2 10 Z" fill="#3a3a3a"/></svg>
<div class="abs" style="left:385px;top:398px;width:1px;height:32px;background:#e4ecf8"></div>
<div class="t" style="left:385px;top:401px;font-size:8.5px;line-height:10px;color:#fff;font-weight:bold;width:65px;text-align:center;overflow:hidden">Category</div>
<div class="t" style="left:385px;top:419px;font-size:8.5px;line-height:10px;color:#3a3a3a;font-weight:normal;width:65px;text-align:center;overflow:hidden">[CategoryName]</div>
<svg style="left:441px;top:414px" width="8" height="12" viewBox="0 0 8 12"><ellipse cx="4" cy="1" rx="3.8" ry="0.95" fill="#3a3a3a"/><path d="M0.2 3.1 Q4 5.2 7.8 3.1 V10 Q4 12.6 0.2 10 Z" fill="#3a3a3a"/></svg>
<div class="abs" style="left:450px;top:398px;width:1px;height:32px;background:#e4ecf8"></div>
<div class="t" style="left:450px;top:401px;font-size:8.5px;line-height:10px;color:#fff;font-weight:bold;width:85px;text-align:center;overflow:hidden">Quantity per Unit</div>
<div class="t" style="left:450px;top:419px;font-size:8.5px;line-height:10px;color:#3a3a3a;font-weight:normal;width:85px;text-align:center;overflow:hidden">[QuantityPerUnit]</div>
<svg style="left:526px;top:414px" width="8" height="12" viewBox="0 0 8 12"><ellipse cx="4" cy="1" rx="3.8" ry="0.95" fill="#3a3a3a"/><path d="M0.2 3.1 Q4 5.2 7.8 3.1 V10 Q4 12.6 0.2 10 Z" fill="#3a3a3a"/></svg>
<div class="abs" style="left:535px;top:398px;width:1px;height:32px;background:#e4ecf8"></div>
<div class="t" style="left:535px;top:401px;font-size:8.5px;line-height:10px;color:#fff;font-weight:bold;width:71px;text-align:center;overflow:hidden">Unit Price</div>
<div class="t" style="left:535px;top:419px;font-size:8.5px;line-height:10px;color:#3a3a3a;font-weight:normal;width:71px;text-align:center;overflow:hidden">[UnitPrice]</div>
<svg style="left:597px;top:414px" width="8" height="12" viewBox="0 0 8 12"><ellipse cx="4" cy="1" rx="3.8" ry="0.95" fill="#3a3a3a"/><path d="M0.2 3.1 Q4 5.2 7.8 3.1 V10 Q4 12.6 0.2 10 Z" fill="#3a3a3a"/></svg>
<div class="abs" style="left:606px;top:398px;width:1px;height:32px;background:#e4ecf8"></div>
<div class="t" style="left:606px;top:401px;font-size:8.5px;line-height:10px;color:#fff;font-weight:bold;width:73px;text-align:center;overflow:hidden">Discontinued</div>
<svg style="left:670px;top:397px" width="8" height="12" viewBox="0 0 8 12"><ellipse cx="4" cy="1" rx="3.8" ry="0.95" fill="#3a3a3a"/><path d="M0.2 3.1 Q4 5.2 7.8 3.1 V10 Q4 12.6 0.2 10 Z" fill="#3a3a3a"/></svg>
<div class="abs" style="left:637px;top:414px;width:15px;height:17px;border:1px solid #b5b5b5;background:transparent;"></div>
<div class="abs" style="left:638px;top:418px;width:11px;height:10px;border-left:1px solid #555;border-bottom:2px solid #8a9ab0;background:#d8e6f8"></div>
<svg style="left:642px;top:414px" width="8" height="12" viewBox="0 0 8 12"><ellipse cx="4" cy="1" rx="3.8" ry="0.95" fill="#3a3a3a"/><path d="M0.2 3.1 Q4 5.2 7.8 3.1 V10 Q4 12.6 0.2 10 Z" fill="#3a3a3a"/></svg>
<div class="abs" style="left:211px;top:434px;width:102px;height:14px;border:1px solid #d6d6d6;border-right:none;background:#fff"></div>
<div class="abs" style="left:211px;top:450px;width:102px;height:14px;background:#fff"></div>
<div class="abs" style="left:211px;top:466px;width:102px;height:12px;border:1px solid #d6d6d6;border-right:none;background:#fff"></div>
<div class="abs" style="left:211px;top:480px;width:102px;height:13px;border:1px solid #d6d6d6;border-right:none;background:#fff"></div>
<div class="abs" style="left:313px;top:434px;width:366px;height:14px;background:#f39c1c"></div>
<div class="t" style="left:313px;top:436px;font-size:8.5px;line-height:10px;color:#fff;font-weight:bold;width:84px;text-align:center;">OrderID</div>
<div class="abs" style="left:397px;top:434px;width:1px;height:14px;background:#fbe3bd"></div>
<div class="t" style="left:397px;top:436px;font-size:8.5px;line-height:10px;color:#fff;font-weight:bold;width:90px;text-align:center;">Quantity</div>
<div class="abs" style="left:487px;top:434px;width:1px;height:14px;background:#fbe3bd"></div>
<div class="t" style="left:487px;top:436px;font-size:8.5px;line-height:10px;color:#fff;font-weight:bold;width:90px;text-align:center;">Discount</div>
<div class="abs" style="left:577px;top:434px;width:1px;height:14px;background:#fbe3bd"></div>
<div class="t" style="left:577px;top:436px;font-size:8.5px;line-height:10px;color:#fff;font-weight:bold;width:102px;text-align:center;">Total</div>
<div class="abs" style="left:211px;top:448px;width:468px;height:1px;background:repeating-linear-gradient(90deg,#f39c1c 0 3px,transparent 3px 5px)"></div>
<div class="abs" style="left:313px;top:450px;width:366px;height:14px;background:#efefef;border-bottom:1px solid #dcdcdc"></div>
<div class="abs" style="left:397px;top:450px;width:1px;height:14px;background:#d9d9d9"></div>
<div class="t" style="left:319px;top:453px;font-size:8.5px;line-height:10px;color:#9a9a9a;font-weight:bold;">Unit price:</div>
<div class="t" style="left:400px;top:452px;font-size:9px;line-height:10px;color:#9a9a9a;font-weight:bold;">[UnitPrice]</div>
<svg style="left:669px;top:449px" width="8" height="12" viewBox="0 0 8 12"><ellipse cx="4" cy="1" rx="3.8" ry="0.95" fill="#3a3a3a"/><path d="M0.2 3.1 Q4 5.2 7.8 3.1 V10 Q4 12.6 0.2 10 Z" fill="#3a3a3a"/></svg>
<div class="abs" style="left:313px;top:465px;width:366px;height:13px;border-top:1px solid #222;border-left:2px solid #222;border-right:1px solid #222"></div>
<div class="t" style="left:315px;top:468px;font-size:9.2px;line-height:10px;color:#6a6a6a;font-weight:normal;width:74px;text-align:center;">[OrderID]</div>
<svg style="left:387px;top:466px" width="8" height="12" viewBox="0 0 8 12"><ellipse cx="4" cy="1" rx="3.8" ry="0.95" fill="#3a3a3a"/><path d="M0.2 3.1 Q4 5.2 7.8 3.1 V10 Q4 12.6 0.2 10 Z" fill="#3a3a3a"/></svg>
<div class="abs" style="left:397px;top:465px;width:2px;height:13px;background:#222"></div>
<div class="t" style="left:399px;top:468px;font-size:9.2px;line-height:10px;color:#6a6a6a;font-weight:normal;width:80px;text-align:center;">[Quantity]</div>
<svg style="left:477px;top:466px" width="8" height="12" viewBox="0 0 8 12"><ellipse cx="4" cy="1" rx="3.8" ry="0.95" fill="#3a3a3a"/><path d="M0.2 3.1 Q4 5.2 7.8 3.1 V10 Q4 12.6 0.2 10 Z" fill="#3a3a3a"/></svg>
<div class="abs" style="left:487px;top:465px;width:2px;height:13px;background:#222"></div>
<div class="t" style="left:489px;top:468px;font-size:9.2px;line-height:10px;color:#6a6a6a;font-weight:normal;width:80px;text-align:center;">[Discount]</div>
<svg style="left:567px;top:466px" width="8" height="12" viewBox="0 0 8 12"><ellipse cx="4" cy="1" rx="3.8" ry="0.95" fill="#3a3a3a"/><path d="M0.2 3.1 Q4 5.2 7.8 3.1 V10 Q4 12.6 0.2 10 Z" fill="#3a3a3a"/></svg>
<div class="abs" style="left:577px;top:465px;width:2px;height:13px;background:#222"></div>
<div class="t" style="left:579px;top:468px;font-size:9.2px;line-height:10px;color:#6a6a6a;font-weight:normal;width:92px;text-align:center;">[OrderDetailsTotal]</div>
<svg style="left:669px;top:466px" width="8" height="12" viewBox="0 0 8 12"><ellipse cx="4" cy="1" rx="3.8" ry="0.95" fill="#3a3a3a"/><path d="M0.2 3.1 Q4 5.2 7.8 3.1 V10 Q4 12.6 0.2 10 Z" fill="#3a3a3a"/></svg>
<div class="abs" style="left:313px;top:480px;width:366px;height:13px;border-left:1px solid #f0cf9a;border-bottom:1px solid #f0dcbc"></div>
<div class="abs" style="left:577px;top:480px;width:102px;height:13px;border:1px solid #f0cf9a"></div>
<div class="t" style="left:319px;top:482px;font-size:8.5px;line-height:10px;color:#111;font-weight:bold;">Total by unit price:</div>
<div class="t" style="left:580px;top:481px;font-size:9px;line-height:10px;color:#111;font-weight:bold;width:88px;text-align:None;overflow:hidden">sumSum([OrderDetai</div>
<svg style="left:669px;top:481px" width="8" height="12" viewBox="0 0 8 12"><ellipse cx="4" cy="1" rx="3.8" ry="0.95" fill="#3a3a3a"/><path d="M0.2 3.1 Q4 5.2 7.8 3.1 V10 Q4 12.6 0.2 10 Z" fill="#3a3a3a"/></svg>
<div class="abs" style="left:212px;top:495px;width:467px;height:13px;background:#c5dcf8"></div>
<div class="t" style="left:217px;top:498px;font-size:9.5px;line-height:11px;color:#111;font-weight:bold;">Grand total:</div>
<div class="t" style="left:579px;top:495px;font-size:10px;line-height:11px;color:#111;font-weight:bold;width:90px;text-align:None;overflow:hidden">sumSum([OrderDet</div>
<svg style="left:669px;top:495px" width="8" height="12" viewBox="0 0 8 12"><ellipse cx="4" cy="1" rx="3.8" ry="0.95" fill="#3a3a3a"/><path d="M0.2 3.1 Q4 5.2 7.8 3.1 V10 Q4 12.6 0.2 10 Z" fill="#3a3a3a"/></svg>
<div class="abs" style="left:211px;top:513px;width:516px;height:1px;background:repeating-linear-gradient(90deg,#333 0 3px,transparent 3px 5px)"></div>
<div class="abs" style="left:211px;top:523px;width:287px;height:12px;border:1px solid #cfcfcf;background:transparent;"></div>
<div class="t" style="left:214px;top:524px;font-size:10px;line-height:12px;color:#111;font-weight:bold;font-family:'Liberation Serif', serif;">[CompanyName]</div>
<svg style="left:489px;top:523px" width="8" height="12" viewBox="0 0 8 12"><ellipse cx="4" cy="1" rx="3.8" ry="0.95" fill="#3a3a3a"/><path d="M0.2 3.1 Q4 5.2 7.8 3.1 V10 Q4 12.6 0.2 10 Z" fill="#3a3a3a"/></svg>
<div class="abs" style="left:211px;top:536px;width:107px;height:12px;border:1px solid #cfcfcf;background:transparent;"></div>
<div class="t" style="left:213px;top:537px;font-size:9px;line-height:11px;color:#222;font-weight:normal;font-family:'Liberation Serif', serif;font-style:italic">{0} of {1} pages</div>
<div class="abs" style="left:620px;top:523px;width:71px;height:13px;border:1px solid #cfcfcf;background:transparent;"></div>
<div class="t" style="left:620px;top:524px;font-size:10px;line-height:12px;color:#111;font-weight:bold;font-family:'Liberation Serif', serif;width:69px;text-align:right;">Total:</div>
<div class="abs" style="left:583px;top:536px;width:109px;height:12px;border:1px solid #cfcfcf;background:transparent;"></div>
<div class="t" style="left:583px;top:537px;font-size:9px;line-height:11px;color:#222;font-weight:normal;font-family:'Liberation Serif', serif;width:106px;text-align:right;font-style:italic">{0} of {1} pages</div>
<div class="abs" style="left:396px;top:563px;width:119px;height:22px;border:1px solid #bdbdbd;background:transparent;"></div>
<svg style="left:398px;top:565px" width="18" height="16" viewBox="0 0 18 16"><path d="M0 0 H15.5 Q18 0 18 2.5 V2.8 C10 3.5 3.5 7.5 0 13 Z" fill="#4a4a4a"/><path d="M18 5.2 V16 H2.5 Q0 16 0.6 15.2 C4 9.5 10 6 18 5.2 Z" fill="#4a4a4a"/></svg>
<div class="t" style="left:420px;top:565px;font-size:15.2px;line-height:18px;color:#4a4a4a;font-weight:bold;">DevExpress</div>
<div class="t" style="left:507px;top:565px;font-size:6px;line-height:7px;color:#4d4d4d;font-weight:normal;">&#8482;</div>
<div class="abs" style="left:766px;top:4px;width:391px;height:672px;background:#fff;border-left:1px solid #dcdcdc"></div>
<div class="abs" style="left:767px;top:4px;width:390px;height:20px;background:#f4f4f4"></div>
<svg style="left:1144px;top:10px" width="7" height="9" viewBox="0 0 7 9"><path d="M1 1 L5.5 4.5 L1 8" fill="none" stroke="#555" stroke-width="2"/></svg>
<div class="abs" style="left:1107px;top:24px;width:50px;height:652px;background:#606060"></div>
<div class="abs" style="left:1107px;top:24px;width:50px;height:48px;background:#4f4f4f"></div>
<svg style="left:1121.9px;top:37.9px" width="20" height="20" viewBox="-10 -10 20 20"><circle cx="0.00" cy="-7.90" r="2.3" fill="#fff"/><circle cx="5.59" cy="-5.59" r="2.3" fill="#fff"/><circle cx="7.90" cy="-0.00" r="2.3" fill="#fff"/><circle cx="5.59" cy="5.59" r="2.3" fill="#fff"/><circle cx="0.00" cy="7.90" r="2.3" fill="#fff"/><circle cx="-5.59" cy="5.59" r="2.3" fill="#fff"/><circle cx="-7.90" cy="0.00" r="2.3" fill="#fff"/><circle cx="-5.59" cy="-5.59" r="2.3" fill="#fff"/><circle r="8.2" fill="#fff"/><circle r="2.95" fill="#fff" stroke="#4f4f4f" stroke-width="1.7"/></svg>
<svg style="left:1118px;top:80px" width="28" height="32" viewBox="0 0 28 32"><path d="M13.6 9.2 C13.8 6.5 16 5.4 21.5 5.3 L18.7 8.4 C16.5 8.6 16.2 9 16.1 10 L14.6 22 C14.3 25 12 26.8 8.9 26.7 L6.1 25.5 C10 24.5 11.6 23.5 11.8 22 Z" fill="#a9a9a9"/><path d="M6.8 15.7 L9.4 13.3 H21.3 L18.7 15.7 Z" fill="#a9a9a9"/></svg>
<svg style="left:1123px;top:131px" width="15" height="23" viewBox="0 0 19 24" preserveAspectRatio="none"><ellipse cx="9.5" cy="3.5" rx="9.5" ry="3.5" fill="#a9a9a9"/><path d="M0 6 C2 8.5 17 8.5 19 6 V11 C17 13.5 2 13.5 0 11 Z" fill="#a9a9a9"/><path d="M0 13 C2 15.5 17 15.5 19 13 V18 C17 20.5 2 20.5 0 18 Z" fill="#a9a9a9"/><path d="M0 20 C2 22.5 17 22.5 19 20 V21 C17 24 2 24 0 21 Z" fill="#a9a9a9"/></svg>
<svg style="left:1120px;top:180px" width="23" height="22" viewBox="0 0 23 22"><g fill="#a9a9a9"><rect x="6" y="0" width="10" height="6"/><rect x="10.2" y="6" width="1.6" height="5"/><rect x="4.7" y="11" width="13" height="1.6"/><rect x="4.7" y="11" width="1.6" height="4.5"/><rect x="16.1" y="11" width="1.6" height="4.5"/><rect x="-0.3" y="15.4" width="9.9" height="6.6"/><rect x="12.2" y="15.4" width="10.1" height="6.6"/></g></svg>
<div class="t" style="left:780px;top:41px;font-size:10px;line-height:12px;font-weight:bold;color:#333;letter-spacing:0.2px">PROPERTIES</div>
<div class="abs" style="left:783px;top:67px;width:187px;height:28px;border:1px solid #3c72c2;border-radius:3px;background:#fff"></div>
<div class="t" style="left:793px;top:75px;font-size:11px;line-height:14px;color:#333">MasterDetailReport (Report)</div>
<svg style="left:952.5px;top:79px" width="8" height="4.5" viewBox="0 0 9 5"><path d="M0 0 H9 L4.5 5 Z" fill="#333"/></svg>
<div class="abs" style="left:979px;top:67px;width:28px;height:28px;border:1px solid #dadada;border-radius:3px;background:#fff"></div>
<div class="t" style="left:985.5px;top:72px;font-size:9px;line-height:9px;font-weight:bold;color:#555">A</div><div class="t" style="left:985.5px;top:81.5px;font-size:9px;line-height:9px;font-weight:bold;color:#555">Z</div>
<svg style="left:993px;top:73px" width="8" height="16" viewBox="0 0 8 16"><path d="M4 0 V14" stroke="#555" stroke-width="1.6"/><path d="M0.6 10.8 H7.4 L4 15 Z" fill="#555"/></svg>
<div class="abs" style="left:1013px;top:67px;width:28px;height:28px;border:1px solid #a9a9a9;border-radius:3px;background:#a9a9a9"></div>
<svg style="left:1019px;top:73px" width="16" height="16" viewBox="0 0 16 16"><g fill="none" stroke="#fff" stroke-width="1.2"><rect x="1.7" y="0.5" width="5.6" height="5.6"/><rect x="1.7" y="9.8" width="5.6" height="5.6"/><path d="M4.5 1.8 V4.8 M3 3.3 H6 M3 12.6 H6 M4.5 11.1 V14.1 M9 1 H15 M9 3.4 H15 M9 5.8 H15 M9 10.3 H15 M9 12.7 H15 M9 15 H15"/></g></svg>
<div class="abs" style="left:1047px;top:67px;width:28px;height:28px;border:1px solid #dadada;border-radius:3px;background:#fff"></div>
<svg style="left:1054px;top:73px" width="14" height="15" viewBox="0 0 14 15"><circle cx="8.5" cy="6.1" r="4.4" fill="none" stroke="#555" stroke-width="2.3"/><path d="M5.4 9.4 L1.2 13.8" stroke="#555" stroke-width="2.6"/></svg>
<div class="abs" style="left:767px;top:104px;width:340px;height:1px;background:#e3e3e3"></div>
<svg style="left:780px;top:121px" width="7" height="6" viewBox="0 0 7 6"><path d="M0 0 H7 L3.5 6 Z" fill="#606060"/></svg>
<div class="t" style="left:792px;top:119px;font-size:10px;line-height:11px;font-weight:bold;color:#333;letter-spacing:0.3px">ACTIONS</div>
<div class="abs" style="left:767px;top:145px;width:340px;height:220px;background:#f4f4f4"></div>
<svg style="left:778px;top:155px" width="12" height="13" viewBox="0 0 12 13"><rect x="0" y="0" width="1" height="1" fill="#cfcfcf"/><rect x="0" y="2" width="1" height="8" fill="#cfcfcf"/><rect x="0" y="11" width="1" height="1" fill="#cfcfcf"/><rect x="9" y="0" width="1" height="1" fill="#cfcfcf"/><rect x="9" y="2" width="1" height="8" fill="#cfcfcf"/><rect x="9" y="11" width="1" height="1" fill="#cfcfcf"/><rect x="2" y="0" width="6" height="1" fill="#cfcfcf"/><rect x="2" y="11" width="6" height="1" fill="#cfcfcf"/><rect x="2" y="2" width="6" height="8" fill="#cfcfcf"/></svg>
<svg style="left:813px;top:155px" width="12" height="13" viewBox="0 0 12 13"><rect x="0" y="0" width="1" height="1" fill="#cfcfcf"/><rect x="0" y="2" width="1" height="8" fill="#cfcfcf"/><rect x="0" y="11" width="1" height="1" fill="#cfcfcf"/><rect x="9" y="0" width="1" height="1" fill="#cfcfcf"/><rect x="9" y="2" width="1" height="8" fill="#cfcfcf"/><rect x="9" y="11" width="1" height="1" fill="#cfcfcf"/><rect x="2" y="0" width="6" height="1" fill="#cfcfcf"/><rect x="2" y="11" width="6" height="1" fill="#cfcfcf"/><rect x="3" y="-1" width="4" height="1" fill="#cfcfcf"/><rect x="2" y="3" width="6" height="2" fill="#cfcfcf"/><rect x="2" y="6" width="6" height="4" fill="#cfcfcf"/></svg>
<svg style="left:848px;top:155px" width="12" height="13" viewBox="0 0 12 13"><rect x="0" y="0" width="1" height="1" fill="#7a7a7a"/><rect x="0" y="2" width="1" height="8" fill="#7a7a7a"/><rect x="0" y="11" width="1" height="1" fill="#7a7a7a"/><rect x="9" y="0" width="1" height="1" fill="#7a7a7a"/><rect x="9" y="2" width="1" height="8" fill="#7a7a7a"/><rect x="9" y="11" width="1" height="1" fill="#7a7a7a"/><rect x="2" y="0" width="6" height="1" fill="#7a7a7a"/><rect x="2" y="11" width="6" height="1" fill="#7a7a7a"/><rect x="2" y="2" width="6" height="2" fill="#7a7a7a"/><rect x="2" y="5" width="6" height="5" fill="#7a7a7a"/></svg>
<svg style="left:882px;top:155px" width="12" height="13" viewBox="0 0 12 13"><rect x="0" y="0" width="6" height="3" fill="#7a7a7a"/><rect x="4" y="4" width="7" height="1" fill="#7a7a7a"/><rect x="4" y="6" width="7" height="1" fill="#7a7a7a"/><rect x="0" y="8" width="6" height="3" fill="#7a7a7a"/></svg>
<svg style="left:918px;top:155px" width="12" height="13" viewBox="0 0 12 13"><rect x="0" y="0" width="9" height="12" fill="#cdcdcd"/><rect x="2" y="2.5" width="5" height="1" fill="#f4f4f4"/><rect x="2" y="4.8" width="5" height="1" fill="#f4f4f4"/><rect x="2" y="7" width="5" height="1" fill="#f4f4f4"/><rect x="2" y="9.2" width="5" height="1" fill="#f4f4f4"/></svg>
<svg style="left:952px;top:156px" width="12" height="13" viewBox="0 0 12 13"><rect x="0" y="0" width="1" height="1" fill="#7a7a7a"/><rect x="0" y="2" width="1" height="6" fill="#7a7a7a"/><rect x="0" y="9" width="1" height="1" fill="#7a7a7a"/><rect x="11" y="0" width="1" height="1" fill="#7a7a7a"/><rect x="11" y="2" width="1" height="6" fill="#7a7a7a"/><rect x="11" y="9" width="1" height="1" fill="#7a7a7a"/><rect x="2" y="0" width="8" height="1" fill="#7a7a7a"/><rect x="2" y="9" width="8" height="1" fill="#7a7a7a"/><rect x="2" y="2" width="1" height="6" fill="#7a7a7a"/><rect x="9" y="2" width="1" height="6" fill="#7a7a7a"/><rect x="4" y="2" width="4" height="6" fill="#7a7a7a"/></svg>
<svg style="left:987px;top:156px" width="12" height="13" viewBox="0 0 12 13"><rect x="0" y="0" width="1" height="1" fill="#7a7a7a"/><rect x="0" y="2" width="1" height="6" fill="#7a7a7a"/><rect x="0" y="9" width="1" height="1" fill="#7a7a7a"/><rect x="11" y="0" width="1" height="1" fill="#7a7a7a"/><rect x="11" y="2" width="1" height="6" fill="#7a7a7a"/><rect x="11" y="9" width="1" height="1" fill="#7a7a7a"/><rect x="2" y="0" width="8" height="1" fill="#7a7a7a"/><rect x="2" y="9" width="8" height="1" fill="#7a7a7a"/><rect x="2" y="2" width="1.2" height="6" fill="#7a7a7a"/><rect x="4.2" y="2" width="1.2" height="6" fill="#7a7a7a"/><rect x="6.6" y="2" width="1.2" height="6" fill="#7a7a7a"/><rect x="8.8" y="2" width="1.2" height="6" fill="#7a7a7a"/></svg>
<svg style="left:1022px;top:156px" width="12" height="13" viewBox="0 0 12 13"><rect x="0" y="0" width="1" height="1" fill="#7a7a7a"/><rect x="0" y="2" width="1" height="6" fill="#7a7a7a"/><rect x="0" y="9" width="1" height="1" fill="#7a7a7a"/><rect x="11" y="0" width="1" height="1" fill="#7a7a7a"/><rect x="11" y="2" width="1" height="6" fill="#7a7a7a"/><rect x="11" y="9" width="1" height="1" fill="#7a7a7a"/><rect x="2" y="0" width="8" height="1" fill="#7a7a7a"/><rect x="2" y="9" width="8" height="1" fill="#7a7a7a"/><rect x="2" y="2" width="1" height="6" fill="#7a7a7a"/><rect x="9" y="2" width="1" height="6" fill="#7a7a7a"/><rect x="4" y="2" width="4" height="6" fill="#7a7a7a"/></svg>
<svg style="left:1058px;top:155px" width="12" height="13" viewBox="0 0 12 13"><path d="M0 1.5 H3 V0.5 H7 V1.5 H10 V12.5 H0 Z" fill="#7a7a7a"/><rect x="2.5" y="4" width="5" height="1.2" fill="#f4f4f4"/><rect x="2.5" y="6.5" width="5" height="1.2" fill="#f4f4f4"/><rect x="2.5" y="9" width="5" height="1.2" fill="#f4f4f4"/></svg>
<svg style="left:777px;top:189px" width="12" height="13" viewBox="0 0 12 13"><rect x="0" y="0" width="6" height="3" fill="#7a7a7a"/><rect x="4" y="4" width="7" height="1" fill="#7a7a7a"/><rect x="4" y="6" width="7" height="1" fill="#7a7a7a"/><rect x="0" y="8" width="6" height="3" fill="#7a7a7a"/></svg>
<svg style="left:813px;top:189px" width="12" height="13" viewBox="0 0 12 13"><rect x="0" y="0" width="1" height="1" fill="#7a7a7a"/><rect x="0" y="2" width="1" height="8" fill="#7a7a7a"/><rect x="0" y="11" width="1" height="1" fill="#7a7a7a"/><rect x="9" y="0" width="1" height="1" fill="#7a7a7a"/><rect x="9" y="2" width="1" height="8" fill="#7a7a7a"/><rect x="9" y="11" width="1" height="1" fill="#7a7a7a"/><rect x="2" y="0" width="6" height="1" fill="#7a7a7a"/><rect x="2" y="11" width="6" height="1" fill="#7a7a7a"/><rect x="3" y="-1" width="4" height="1" fill="#7a7a7a"/><rect x="2" y="2" width="6" height="5" fill="#7a7a7a"/><rect x="2" y="8" width="6" height="2" fill="#7a7a7a"/></svg>
<svg style="left:848px;top:189px" width="12" height="13" viewBox="0 0 12 13"><rect x="0" y="0" width="1" height="1" fill="#7a7a7a"/><rect x="0" y="2" width="1" height="8" fill="#7a7a7a"/><rect x="0" y="11" width="1" height="1" fill="#7a7a7a"/><rect x="9" y="0" width="1" height="1" fill="#7a7a7a"/><rect x="9" y="2" width="1" height="8" fill="#7a7a7a"/><rect x="9" y="11" width="1" height="1" fill="#7a7a7a"/><rect x="2" y="0" width="6" height="1" fill="#7a7a7a"/><rect x="2" y="11" width="6" height="1" fill="#7a7a7a"/><rect x="2" y="2" width="6" height="5" fill="#7a7a7a"/><rect x="2" y="8" width="6" height="2" fill="#7a7a7a"/></svg>
<svg style="left:883px;top:189px" width="12" height="13" viewBox="0 0 12 13"><rect x="0" y="0" width="1" height="1" fill="#cfcfcf"/><rect x="0" y="2" width="1" height="8" fill="#cfcfcf"/><rect x="0" y="11" width="1" height="1" fill="#cfcfcf"/><rect x="9" y="0" width="1" height="1" fill="#cfcfcf"/><rect x="9" y="2" width="1" height="8" fill="#cfcfcf"/><rect x="9" y="11" width="1" height="1" fill="#cfcfcf"/><rect x="2" y="0" width="6" height="1" fill="#cfcfcf"/><rect x="2" y="11" width="6" height="1" fill="#cfcfcf"/><rect x="2" y="2" width="6" height="8" fill="#cfcfcf"/></svg>
<svg style="left:918px;top:189px" width="12" height="13" viewBox="0 0 12 13"><rect x="0" y="1" width="7" height="3" fill="#cfcfcf"/><rect x="3" y="6" width="7" height="3" fill="#cfcfcf"/></svg>
<div class="t" style="left:783px;top:226px;font-size:11px;line-height:14px;font-weight:bold;color:#333">Data Source</div>
<div class="abs" style="left:905px;top:219px;width:170px;height:26px;border:1px solid #dadada;border-radius:3px;background:#fff"></div>
<div class="t" style="left:915px;top:226px;font-size:11px;line-height:14px;color:#333">dsMasterDetail1</div>
<svg style="left:1057.5px;top:230.5px" width="8" height="4.5" viewBox="0 0 9 5"><path d="M0 0 H9 L4.5 5 Z" fill="#333"/></svg>
<div class="abs" style="left:1082px;top:227px;width:9.5px;height:9.5px;border:1px solid #555;background:#fff"></div>
<div class="t" style="left:783px;top:264px;font-size:11px;line-height:14px;font-weight:bold;color:#333">Data Member</div>
<div class="abs" style="left:905px;top:257px;width:170px;height:26px;border:1px solid #dadada;border-radius:3px;background:#fff"></div>
<div class="t" style="left:915px;top:264px;font-size:11px;line-height:14px;color:#333">Suppliers</div>
<svg style="left:1057.5px;top:268.5px" width="8" height="4.5" viewBox="0 0 9 5"><path d="M0 0 H9 L4.5 5 Z" fill="#333"/></svg>
<svg style="left:1030px;top:263px" width="15" height="15" viewBox="0 0 15 15"><circle cx="7.5" cy="7.5" r="7.5" fill="#8a8a8a"/><path d="M4.3 4.3 L10.7 10.7 M10.7 4.3 L4.3 10.7" stroke="#fff" stroke-width="1.3"/></svg>
<div class="abs" style="left:1082px;top:265px;width:9.5px;height:9.5px;border:1px solid #555;background:#fff"></div>
<div class="t" style="left:783px;top:302px;font-size:11px;line-height:14px;font-weight:normal;color:#333">Filter String</div>
<div class="abs" style="left:905px;top:295px;width:170px;height:26px;border:1px solid #dadada;border-radius:3px;background:#fff"></div>
<div class="abs" style="left:1057px;top:307px;width:2px;height:2px;background:#333"></div>
<div class="abs" style="left:1061px;top:307px;width:2px;height:2px;background:#333"></div>
<div class="abs" style="left:1065px;top:307px;width:2px;height:2px;background:#333"></div>
<div class="abs" style="left:1082px;top:303px;width:9.5px;height:9.5px;border:1px solid #555;background:#e6e6e6"></div>
<div class="t" style="left:783px;top:340px;font-size:11px;line-height:14px;font-weight:normal;color:#333">Measure Units</div>
<div class="abs" style="left:905px;top:333px;width:170px;height:26px;border:1px solid #dadada;border-radius:3px;background:#fff"></div>
<div class="t" style="left:915px;top:340px;font-size:11px;line-height:14px;color:#333">Hundredths of an Inch</div>
<svg style="left:1057.5px;top:344.5px" width="8" height="4.5" viewBox="0 0 9 5"><path d="M0 0 H9 L4.5 5 Z" fill="#333"/></svg>
<div class="abs" style="left:1082px;top:341px;width:9.5px;height:9.5px;border:1px solid #555;background:#fff"></div>
<svg style="left:782px;top:381px" width="6" height="7" viewBox="0 0 6 7"><path d="M0 0 L6 3.5 L0 7 Z" fill="#555"/></svg>
<div class="t" style="left:792px;top:379px;font-size:10px;line-height:11px;font-weight:bold;color:#333;letter-spacing:0.3px">APPEARANCE</div>
<div class="abs" style="left:767px;top:404px;width:340px;height:1px;background:#e3e3e3"></div>
<svg style="left:782px;top:421px" width="6" height="7" viewBox="0 0 6 7"><path d="M0 0 L6 3.5 L0 7 Z" fill="#555"/></svg>
<div class="t" style="left:792px;top:419px;font-size:10px;line-height:11px;font-weight:bold;color:#333;letter-spacing:0.3px">BEHAVIOR</div>
<div class="abs" style="left:767px;top:444px;width:340px;height:1px;background:#e3e3e3"></div>
<svg style="left:782px;top:461px" width="6" height="7" viewBox="0 0 6 7"><path d="M0 0 L6 3.5 L0 7 Z" fill="#555"/></svg>
<div class="t" style="left:792px;top:459px;font-size:10px;line-height:11px;font-weight:bold;color:#333;letter-spacing:0.3px">DATA</div>
<div class="abs" style="left:767px;top:484px;width:340px;height:1px;background:#e3e3e3"></div>
<svg style="left:782px;top:501px" width="6" height="7" viewBox="0 0 6 7"><path d="M0 0 L6 3.5 L0 7 Z" fill="#555"/></svg>
<div class="t" style="left:792px;top:499px;font-size:10px;line-height:11px;font-weight:bold;color:#333;letter-spacing:0.3px">DESIGN</div>
<div class="abs" style="left:767px;top:524px;width:340px;height:1px;background:#e3e3e3"></div>
<svg style="left:782px;top:541px" width="6" height="7" viewBox="0 0 6 7"><path d="M0 0 L6 3.5 L0 7 Z" fill="#555"/></svg>
<div class="t" style="left:792px;top:539px;font-size:10px;line-height:11px;font-weight:bold;color:#333;letter-spacing:0.3px">NAVIGATION</div>
<div class="abs" style="left:767px;top:564px;width:340px;height:1px;background:#e3e3e3"></div>
<svg style="left:782px;top:581px" width="6" height="7" viewBox="0 0 6 7"><path d="M0 0 L6 3.5 L0 7 Z" fill="#555"/></svg>
<div class="t" style="left:792px;top:579px;font-size:10px;line-height:11px;font-weight:bold;color:#333;letter-spacing:0.3px">PAGE SETTINGS</div>
<div class="abs" style="left:767px;top:604px;width:340px;height:1px;background:#e3e3e3"></div>
<svg style="left:782px;top:621px" width="6" height="7" viewBox="0 0 6 7"><path d="M0 0 L6 3.5 L0 7 Z" fill="#555"/></svg>
<div class="t" style="left:792px;top:619px;font-size:10px;line-height:11px;font-weight:bold;color:#333;letter-spacing:0.3px">PRINTING</div>
<div class="abs" style="left:767px;top:644px;width:340px;height:1px;background:#e3e3e3"></div></body></html>
